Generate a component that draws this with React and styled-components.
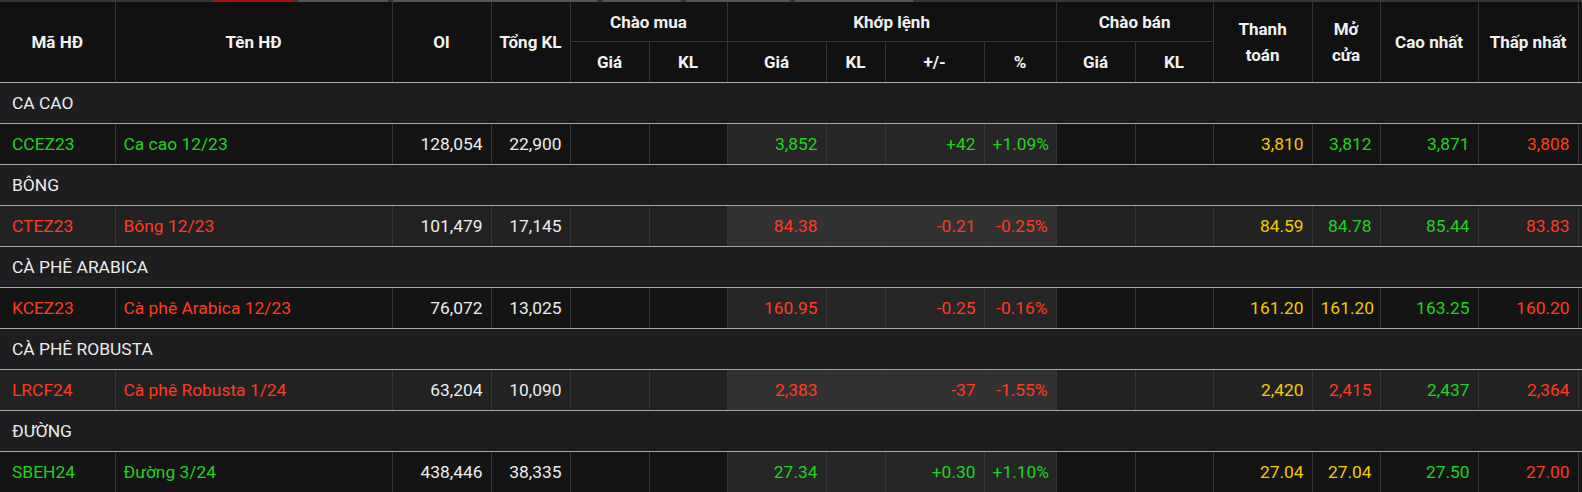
import React from 'react';
import styled, { createGlobalStyle } from 'styled-components';

const GlobalStyle = createGlobalStyle`
  html, body { margin: 0; padding: 0; background: #111111; overflow: hidden; }
  body { font-family: Roboto, "Noto Sans", "Liberation Sans", sans-serif; }
`;

const Page = styled.div`
  width: 1582px;
  height: 492px;
  overflow: hidden;
  background: #111111;
`;

const Strip = styled.div`
  display: flex;
  height: 2px;
  background: #343434;
`;

const StripSeg = styled.span`
  flex: 0 0 ${p => p.$w}px;
  margin-left: ${p => p.$ml}px;
  background: ${p => p.$c};
`;

const Table = styled.table`
  border-collapse: collapse;
  table-layout: fixed;
  width: 1618px;
  color: #ececec;
  font-size: 17.4px;
`;

const HeadCell = styled.th`
  background: #111111;
  color: #f2f2f2;
  font-size: 17px;
  font-weight: 700;
  text-align: center;
  vertical-align: middle;
  line-height: 26px;
  padding: 0 4px;
  height: ${p => p.$h || 39}px;
  border-right: 1px solid #363636;
  border-bottom: 1px solid ${p => (p.$last ? '#a9a9a9' : '#363636')};
`;

const GroupCell = styled.td`
  background: #1e1e20;
  color: #ececec;
  height: 40px;
  padding: 0 12px;
  text-align: left;
  border-bottom: 1px solid #a3a3a3;
`;

const colors = {
  g: '#1fd31f',
  r: '#ff3b1e',
  y: '#f6c800',
  w: '#ececec',
};

const Cell = styled.td`
  height: 40px;
  padding: 0 8px 0 ${p => (p.$first ? 12 : 8)}px;
  text-align: ${p => (p.$left ? 'left' : 'right')};
  white-space: nowrap;
  overflow: hidden;
  color: ${p => colors[p.$c || 'w']};
  background: ${p =>
    p.$hl ? (p.$alt ? '#323232' : '#262626') : p.$alt ? '#222223' : '#141414'};
  border-right: 1px solid #363636;
  border-bottom: 1px solid #a3a3a3;
`;

const widths = [115, 277, 99, 79, 79, 78, 99, 59, 99, 72, 79, 78, 99, 68, 98, 100, 40];

const groups = [
  {
    name: 'CA CAO',
    c: 'g',
    code: 'CCEZ23',
    title: 'Ca cao 12/23',
    oi: '128,054',
    vol: '22,900',
    price: ['3,852', 'g'],
    chg: ['+42', 'g'],
    pct: ['+1.09%', 'g'],
    settle: '3,810',
    open: ['3,812', 'g'],
    high: ['3,871', 'g'],
    low: ['3,808', 'r'],
  },
  {
    name: 'BÔNG',
    c: 'r',
    code: 'CTEZ23',
    title: 'Bông 12/23',
    oi: '101,479',
    vol: '17,145',
    price: ['84.38', 'r'],
    chg: ['-0.21', 'r'],
    pct: ['-0.25%', 'r'],
    settle: '84.59',
    open: ['84.78', 'g'],
    high: ['85.44', 'g'],
    low: ['83.83', 'r'],
  },
  {
    name: 'CÀ PHÊ ARABICA',
    c: 'r',
    code: 'KCEZ23',
    title: 'Cà phê Arabica 12/23',
    oi: '76,072',
    vol: '13,025',
    price: ['160.95', 'r'],
    chg: ['-0.25', 'r'],
    pct: ['-0.16%', 'r'],
    settle: '161.20',
    open: ['161.20', 'y'],
    high: ['163.25', 'g'],
    low: ['160.20', 'r'],
  },
  {
    name: 'CÀ PHÊ ROBUSTA',
    c: 'r',
    code: 'LRCF24',
    title: 'Cà phê Robusta 1/24',
    oi: '63,204',
    vol: '10,090',
    price: ['2,383', 'r'],
    chg: ['-37', 'r'],
    pct: ['-1.55%', 'r'],
    settle: '2,420',
    open: ['2,415', 'r'],
    high: ['2,437', 'g'],
    low: ['2,364', 'r'],
  },
  {
    name: 'ĐƯỜNG',
    c: 'g',
    code: 'SBEH24',
    title: 'Đường 3/24',
    oi: '438,446',
    vol: '38,335',
    price: ['27.34', 'g'],
    chg: ['+0.30', 'g'],
    pct: ['+1.10%', 'g'],
    settle: '27.04',
    open: ['27.04', 'y'],
    high: ['27.50', 'g'],
    low: ['27.00', 'r'],
  },
];

const segs = [
  { ml: 213, w: 81, c: '#a80f0f' },
  { ml: 4, w: 90, c: '#555555' },
  { ml: 5, w: 204, c: '#555555' },
  { ml: 6, w: 78, c: '#555555' },
  { ml: 5, w: 104, c: '#555555' },
  { ml: 5, w: 118, c: '#555555' },
];

function DataRow({ g, alt }) {
  return (
    <tr>
      <Cell $first $left $alt={alt} $c={g.c}>{g.code}</Cell>
      <Cell $left $alt={alt} $c={g.c}>{g.title}</Cell>
      <Cell $alt={alt}>{g.oi}</Cell>
      <Cell $alt={alt}>{g.vol}</Cell>
      <Cell $alt={alt} />
      <Cell $alt={alt} />
      <Cell $alt={alt} $hl $c={g.price[1]}>{g.price[0]}</Cell>
      <Cell $alt={alt} $hl />
      <Cell $alt={alt} $hl $c={g.chg[1]}>{g.chg[0]}</Cell>
      <Cell $alt={alt} $hl $c={g.pct[1]}>{g.pct[0]}</Cell>
      <Cell $alt={alt} />
      <Cell $alt={alt} />
      <Cell $alt={alt} $c="y">{g.settle}</Cell>
      <Cell $alt={alt} $c={g.open[1]}>{g.open[0]}</Cell>
      <Cell $alt={alt} $c={g.high[1]}>{g.high[0]}</Cell>
      <Cell $alt={alt} $c={g.low[1]}>{g.low[0]}</Cell>
      <Cell $alt={alt} />
    </tr>
  );
}

export default function App() {
  return (
    <Page>
      <GlobalStyle />
      <Strip>
        {segs.map((s, i) => (
          <StripSeg key={i} $ml={s.ml} $w={s.w} $c={s.c} />
        ))}
      </Strip>
      <Table>
        <colgroup>
          {widths.map((w, i) => (
            <col key={i} style={{ width: w }} />
          ))}
        </colgroup>
        <thead>
          <tr>
            <HeadCell rowSpan={2} $last>Mã HĐ</HeadCell>
            <HeadCell rowSpan={2} $last>Tên HĐ</HeadCell>
            <HeadCell rowSpan={2} $last>OI</HeadCell>
            <HeadCell rowSpan={2} $last>Tổng KL</HeadCell>
            <HeadCell colSpan={2}>Chào mua</HeadCell>
            <HeadCell colSpan={4}>Khớp lệnh</HeadCell>
            <HeadCell colSpan={2}>Chào bán</HeadCell>
            <HeadCell rowSpan={2} $last>Thanh<br />toán</HeadCell>
            <HeadCell rowSpan={2} $last>Mở<br />cửa</HeadCell>
            <HeadCell rowSpan={2} $last>Cao nhất</HeadCell>
            <HeadCell rowSpan={2} $last>Thấp nhất</HeadCell>
            <HeadCell rowSpan={2} $last />
          </tr>
          <tr>
            <HeadCell $last $h={40}>Giá</HeadCell>
            <HeadCell $last $h={40}>KL</HeadCell>
            <HeadCell $last $h={40}>Giá</HeadCell>
            <HeadCell $last $h={40}>KL</HeadCell>
            <HeadCell $last $h={40}>+/-</HeadCell>
            <HeadCell $last $h={40}>%</HeadCell>
            <HeadCell $last $h={40}>Giá</HeadCell>
            <HeadCell $last $h={40}>KL</HeadCell>
          </tr>
        </thead>
        <tbody>
          {groups.map((g, i) => (
            <React.Fragment key={g.code}>
              <tr>
                <GroupCell colSpan={17}>{g.name}</GroupCell>
              </tr>
              <DataRow g={g} alt={i % 2 === 1} />
            </React.Fragment>
          ))}
        </tbody>
      </Table>
    </Page>
  );
}
